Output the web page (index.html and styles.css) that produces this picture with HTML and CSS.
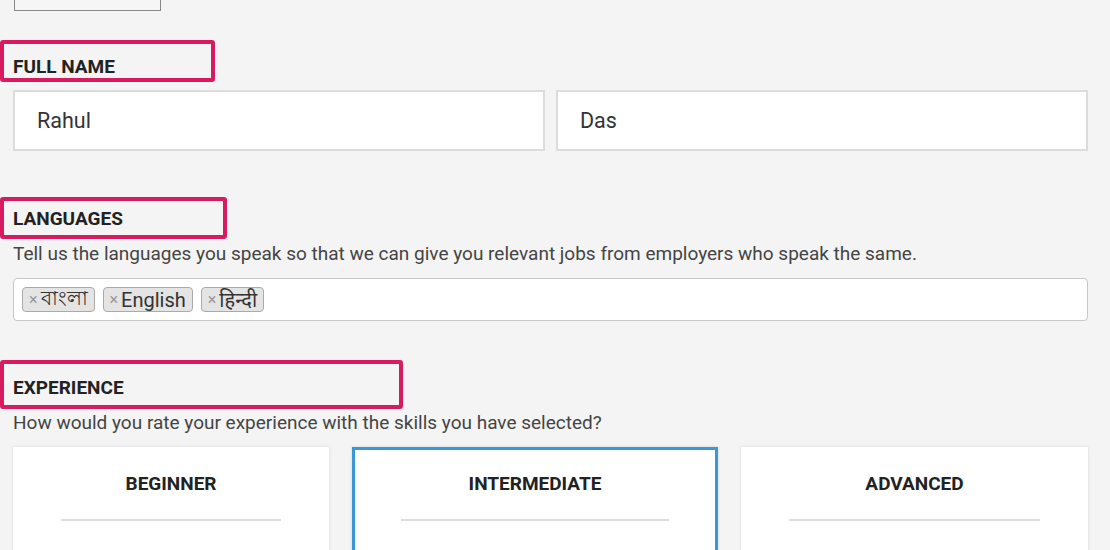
FILE: index.html
```html
<!DOCTYPE html>
<html>
<head>
<meta charset="utf-8">
<link rel="stylesheet" href="styles.css">
</head>
<body>
<div class="page">
  <div class="topbox"></div>

  <div class="mark mark-name"><span class="label">Full Name</span></div>
  <div class="name-row">
    <div class="input">Rahul</div>
    <div class="input">Das</div>
  </div>

  <div class="mark mark-lang"><span class="label">Languages</span></div>
  <p class="help">Tell us the languages you speak so that we can give you relevant jobs from employers who speak the same.</p>
  <div class="tags">
    <span class="tag"><span class="x">×</span>বাংলা</span>
    <span class="tag"><span class="x">×</span>English</span>
    <span class="tag"><span class="x">×</span>हिन्दी</span>
  </div>

  <div class="mark mark-exp"><span class="label">Experience</span></div>
  <p class="help help-exp">How would you rate your experience with the skills you have selected?</p>
  <div class="cards">
    <div class="card"><div class="card-title">Beginner</div><div class="rule"></div></div>
    <div class="card card-active"><div class="card-title">Intermediate</div><div class="rule"></div></div>
    <div class="card"><div class="card-title">Advanced</div><div class="rule"></div></div>
  </div>
</div>
</body>
</html>
```
FILE: styles.css
```css
html, body {
  margin: 0;
  padding: 0;
  background: #f4f4f4;
  overflow: hidden;
}
body {
  font-family: Roboto, "Noto Sans", "Liberation Sans", sans-serif;
  color: #333;
}
.page {
  padding: 0 22px 0 13px;
}
.topbox {
  width: 145px;
  height: 40px;
  margin-top: -31px;
  margin-left: 1px;
  border: 1px solid #888;
  background: #f6f6f6;
}
.mark {
  box-sizing: border-box;
  margin-left: -13px;
  border: 4px solid #d81b60;
  border-radius: 3px;
  padding-left: 9px;
  display: flex;
  align-items: flex-end;
}
.label {
  text-transform: uppercase;
  font-weight: 700;
  font-size: 19px;
  color: #222;
  line-height: 20px;
}
.mark-name {
  width: 215px;
  height: 42px;
  margin-top: 29px;
  padding-bottom: 1px;
}
.name-row {
  display: grid;
  grid-template-columns: 1fr 1fr;
  gap: 11px;
  margin-top: 8px;
}
.input {
  height: 61px;
  box-sizing: border-box;
  background: #fff;
  border: 2px solid #dcdcdc;
  padding-left: 22px;
  display: flex;
  align-items: center;
  font-size: 21.5px;
  color: #333;
}
.mark-lang {
  width: 227px;
  height: 42px;
  margin-top: 46px;
  padding-bottom: 6px;
}
.help {
  margin: 4px 0 0 0;
  font-size: 19px;
  line-height: 22px;
  color: #444;
}
.tags {
  margin-top: 13px;
  height: 43px;
  box-sizing: border-box;
  background: #fff;
  border: 1px solid #c8c8c8;
  border-radius: 4px;
  padding: 8px 0 0 8px;
  display: flex;
  gap: 8px;
  align-items: flex-start;
}
.tag {
  box-sizing: border-box;
  height: 25px;
  display: inline-flex;
  align-items: center;
  padding: 0 6px 0 6px;
  background: #e4e4e4;
  border: 1px solid #aaa;
  border-radius: 4px;
  font-size: 20px;
  color: #333;
}
.x {
  color: #999;
  font-size: 16px;
  margin-right: 3px;
}
.mark-exp {
  width: 403px;
  height: 49px;
  margin-top: 39px;
  padding-bottom: 7px;
}
.help-exp {
  margin-top: 3px;
}
.cards {
  display: grid;
  grid-template-columns: 316px 366px 347px;
  gap: 23px;
  margin-top: 13px;
}
.card {
  box-sizing: border-box;
  height: 140px;
  background: #fff;
  box-shadow: 0 0 3px rgba(0,0,0,0.12);
  padding: 0 48px;
  text-align: center;
}
.card-active {
  border: 3px solid #3a98d8;
  padding: 0 46px;
}
.card-title {
  text-transform: uppercase;
  font-weight: 700;
  font-size: 19px;
  color: #222;
  line-height: 20px;
  padding-top: 27px;
}
.card-active .card-title {
  padding-top: 24px;
}
.rule {
  height: 2px;
  background: #ddd;
  margin-top: 25px;
}
```
